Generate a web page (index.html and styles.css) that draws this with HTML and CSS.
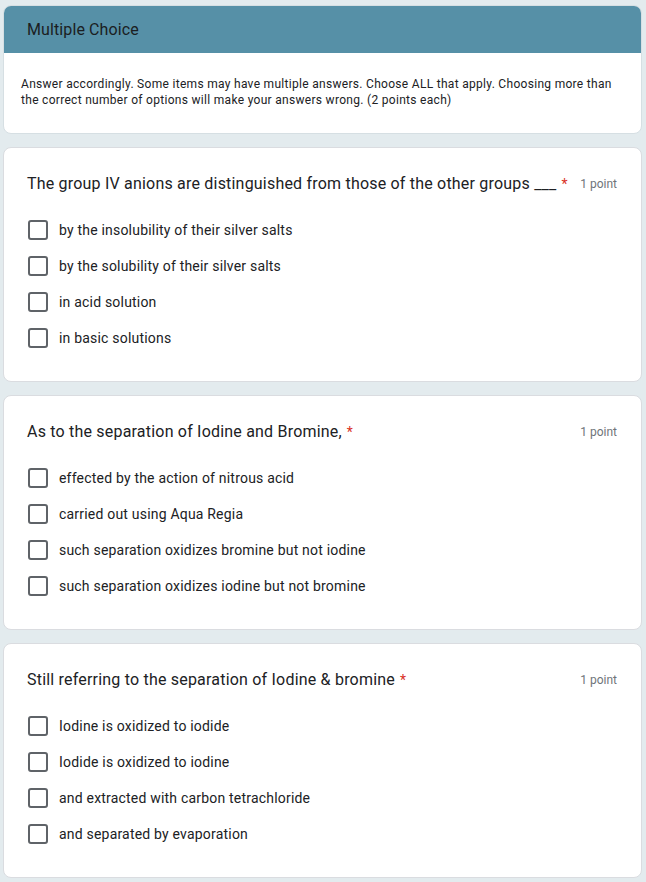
FILE: index.html
```html
<!DOCTYPE html>
<html lang="en">
<head>
<meta charset="utf-8">
<title>Multiple Choice</title>
<link rel="stylesheet" href="styles.css">
</head>
<body>
<main class="page">
  <section class="card header-card">
    <div class="header-band">Multiple Choice</div>
    <p class="description">Answer accordingly. Some items may have multiple answers. Choose ALL that apply. Choosing more than the correct number of options will make your answers wrong. (2 points each)</p>
  </section>

  <section class="card question">
    <div class="q-head">
      <div class="q-title">The group IV anions are distinguished from those of the other groups ___<span class="req">*</span></div>
      <div class="points">1 point</div>
    </div>
    <ul class="options">
      <li class="option"><span class="box"></span><span class="label">by the insolubility of their silver salts</span></li>
      <li class="option"><span class="box"></span><span class="label">by the solubility of their silver salts</span></li>
      <li class="option"><span class="box"></span><span class="label">in acid solution</span></li>
      <li class="option"><span class="box"></span><span class="label">in basic solutions</span></li>
    </ul>
  </section>

  <section class="card question">
    <div class="q-head">
      <div class="q-title">As to the separation of Iodine and Bromine,<span class="req">*</span></div>
      <div class="points">1 point</div>
    </div>
    <ul class="options">
      <li class="option"><span class="box"></span><span class="label">effected by the action of nitrous acid</span></li>
      <li class="option"><span class="box"></span><span class="label">carried out using Aqua Regia</span></li>
      <li class="option"><span class="box"></span><span class="label">such separation oxidizes bromine but not iodine</span></li>
      <li class="option"><span class="box"></span><span class="label">such separation oxidizes iodine but not bromine</span></li>
    </ul>
  </section>

  <section class="card question">
    <div class="q-head">
      <div class="q-title">Still referring to the separation of Iodine &amp; bromine<span class="req">*</span></div>
      <div class="points">1 point</div>
    </div>
    <ul class="options">
      <li class="option"><span class="box"></span><span class="label">Iodine is oxidized to iodide</span></li>
      <li class="option"><span class="box"></span><span class="label">Iodide is oxidized to iodine</span></li>
      <li class="option"><span class="box"></span><span class="label">and extracted with carbon tetrachloride</span></li>
      <li class="option"><span class="box"></span><span class="label">and separated by evaporation</span></li>
    </ul>
  </section>
</main>
</body>
</html>
```
FILE: styles.css
```css
html, body {
  margin: 0;
  padding: 0;
}
body {
  background: #e3ebee;
  font-family: Roboto, "Liberation Sans", Arial, sans-serif;
  color: #202124;
}
.page {
  display: flex;
  flex-direction: column;
  gap: 13px;
  padding: 5px 4px 4px 3px;
}
.card {
  background: #ffffff;
  border: 1px solid #dadce0;
  border-radius: 8px;
  overflow: hidden;
}
.header-card {
  border-color: #d6dfe3;
}
.header-band {
  background: #5690a7;
  height: 48px;
  display: flex;
  align-items: center;
  font-size: 16px;
  letter-spacing: 0.1px;
  color: #1b1e22;
  margin: -1px -1px 0 -1px;
  padding-left: 24px;
}
.description {
  margin: 0;
  padding: 23px 24px 25px 17px;
  font-size: 12px;
  line-height: 16px;
  letter-spacing: 0.3px;
  color: #202124;
}
.question {
  padding: 24px 24px 25px 23px;
}
.q-head {
  display: flex;
  justify-content: space-between;
  align-items: center;
  height: 24px;
}
.q-title {
  font-size: 16px;
  line-height: 24px;
  letter-spacing: 0.2px;
  color: #202124;
}
.req {
  color: #d93025;
  margin-left: 5px;
  font-size: 14px;
}
.points {
  font-size: 12px;
  color: #70757a;
  margin-left: 12px;
}
.options {
  list-style: none;
  margin: 16px 0 0 0;
  padding: 0;
}
.option {
  display: flex;
  align-items: center;
  height: 36px;
}
.box {
  width: 20px;
  height: 20px;
  box-sizing: border-box;
  border: 2px solid #5f6368;
  border-radius: 3px;
  flex: none;
  margin-left: 1px;
  margin-right: 11px;
}
.label {
  font-size: 14px;
  letter-spacing: 0.2px;
  color: #202124;
}
```
